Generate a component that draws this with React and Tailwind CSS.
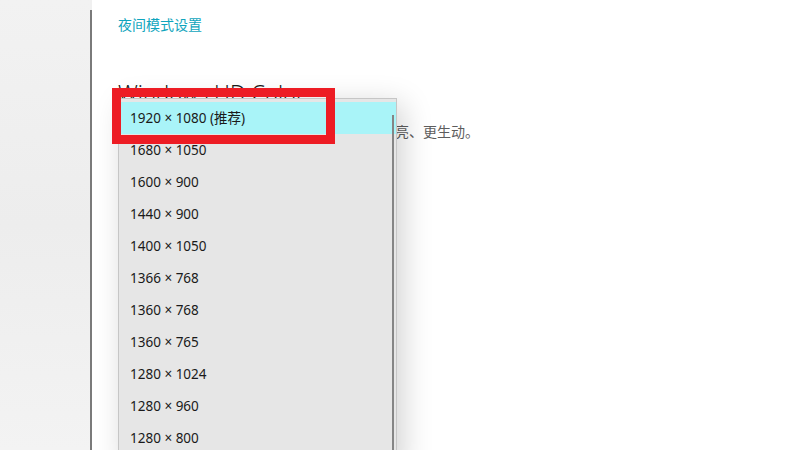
import React from 'react';

const resolutions = [
  '1920 × 1080 (推荐)',
  '1680 × 1050',
  '1600 × 900',
  '1440 × 900',
  '1400 × 1050',
  '1366 × 768',
  '1360 × 768',
  '1360 × 765',
  '1280 × 1024',
  '1280 × 960',
  '1280 × 800',
  '1280 × 720',
];

const font = { fontFamily: '"Noto Sans", "Noto Sans CJK SC", sans-serif' };

const App = () => {
  return (
    <div className="relative w-[800px] h-[450px] overflow-hidden flex bg-white" style={font}>
      {/* left pane */}
      <div className="w-[90px] h-full bg-gradient-to-b from-[#f2f2f2] via-[#ededed] to-[#f3f3f3]" />
      <div className="w-[2px] h-full pt-[10px] bg-[#f0f0f0]">
        <div className="w-full h-full bg-[#7a7a7a]" />
      </div>

      {/* settings content */}
      <div className="flex-1 pl-[26px] pt-[15px]">
        <a className="block text-[14px] leading-[20px] text-[#10a5bd]">夜间模式设置</a>
        <h2 className="mt-[42px] text-[22px] leading-[30px] font-light text-[#1a1a1a]">Windows HD Color</h2>
        <p className="mt-[15px] -ml-[3px] text-[14px] leading-[20px] text-[#5d5d5d] whitespace-nowrap">
          在支持高动态范围的显示器上让视频画面更明亮、更生动。
        </p>
      </div>

      {/* dropdown list */}
      <div className="absolute left-[118px] top-[98px] w-[279px] h-[370px] bg-[#e6e6e6] border border-[#c6c6c6] pt-[3px] shadow-[6px_6px_28px_rgba(0,0,0,0.18)]">
        {resolutions.map((r, i) => (
          <div
            key={r}
            className={`h-[32px] flex items-center pl-[11px] text-[13.5px] text-[#1a1a1a] ${i === 0 ? 'bg-[#a9f4f8]' : ''}`}
          >
            {r}
          </div>
        ))}
        <div className="absolute right-[2px] top-[16px] bottom-0 w-[2px] bg-[#858585]" />
      </div>

      {/* red highlight frame */}
      <div className="absolute left-[112px] top-[88px] w-[223px] h-[56px] border-[9px] border-[#ed1c24]" />
    </div>
  );
};

export default App;
